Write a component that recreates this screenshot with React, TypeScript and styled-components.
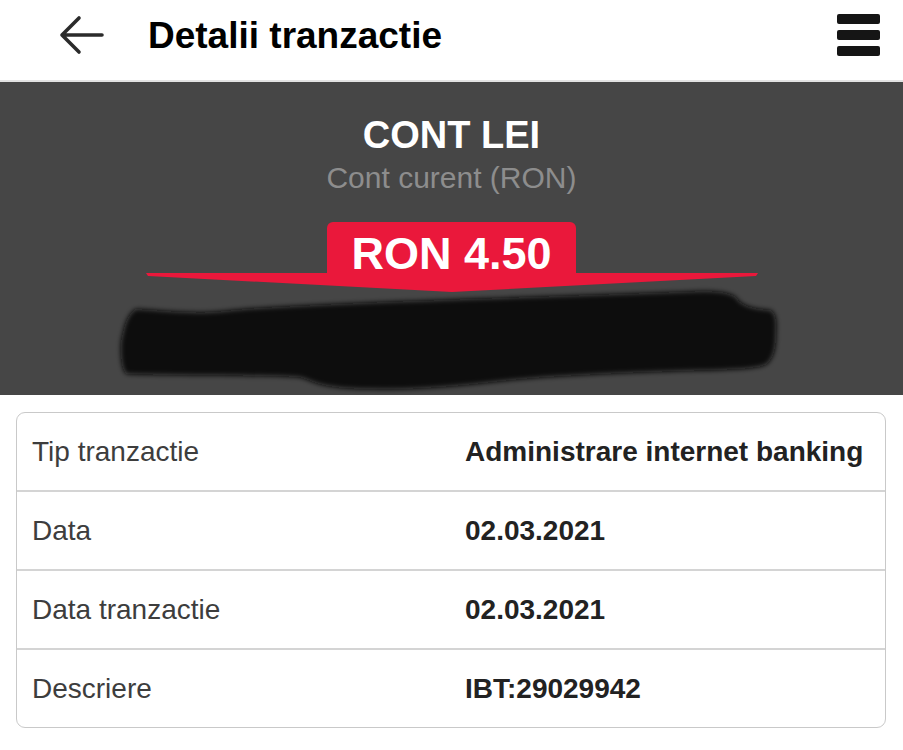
import styled, { createGlobalStyle } from "styled-components";

const GlobalStyle = createGlobalStyle`
  body {
    margin: 0;
    background: #ffffff;
    font-family: "Liberation Sans", Arial, Helvetica, sans-serif;
  }
`;

const Page = styled.div`
  display: flex;
  flex-direction: column;
  width: 903px;
  min-height: 750px;
  background: #ffffff;
`;

const Header = styled.header`
  display: flex;
  align-items: center;
  height: 82px;
  padding: 0 23px 10px 58px;
  box-sizing: border-box;
  border-bottom: 2px solid #e2e2e2;
`;

const BackButton = styled.button`
  all: unset;
  display: flex;
  width: 47px;
  height: 40px;
  cursor: pointer;
`;

const Title = styled.h1`
  flex: 1;
  margin: 2px 0 0 43px;
  color: #000000;
  font-size: 37px;
  font-weight: 700;
  letter-spacing: 0;
`;

const MenuButton = styled.button`
  all: unset;
  display: flex;
  flex-direction: column;
  gap: 6px;
  cursor: pointer;
`;

const MenuBar = styled.span`
  display: block;
  width: 43px;
  height: 10px;
  border-radius: 2px;
  background: #151515;
`;

const AccountPanel = styled.section`
  display: flex;
  flex-direction: column;
  align-items: center;
  height: 313px;
  padding-top: 31px;
  box-sizing: border-box;
  background: #464646;
  overflow: hidden;
`;

const AccountName = styled.div`
  color: #ffffff;
  font-size: 38px;
  font-weight: 700;
  line-height: 44px;
`;

const AccountType = styled.div`
  margin-top: 4px;
  color: #8d8d8d;
  font-size: 30px;
  line-height: 34px;
`;

const AmountBlock = styled.div`
  display: flex;
  flex-direction: column;
  align-items: center;
  margin-top: 27px;
`;

const AmountBadge = styled.div`
  padding: 8px 24px 0;
  height: 52px;
  box-sizing: border-box;
  border-radius: 6px 6px 0 0;
  background: #ea183b;
  color: #ffffff;
  font-size: 45px;
  font-weight: 700;
  line-height: 48px;
`;

const Ribbon = styled.svg`
  display: block;
  width: 612px;
  height: 20px;
  margin-top: -1px;
`;

const Redaction = styled.svg`
  display: block;
  width: 680px;
  height: 112px;
  margin-top: -10px;
`;

const DetailsTable = styled.div`
  margin: 17px 17px 0 16px;
  border: 1px solid #c9c9c9;
  border-radius: 9px;
  overflow: hidden;
`;

const DetailRow = styled.div<{ $first?: boolean }>`
  display: grid;
  grid-template-columns: 433px 1fr;
  align-items: center;
  height: 77px;
  padding: 0 15px;
  border-top: ${(p) => (p.$first ? "none" : "2px solid #d4d4d4")};
`;

const Label = styled.span`
  color: #3d3d3d;
  font-size: 28px;
`;

const Value = styled.span`
  color: #222222;
  font-size: 28px;
  font-weight: 700;
  white-space: nowrap;
`;

const details = [
  ["Tip tranzactie", "Administrare internet banking"],
  ["Data", "02.03.2021"],
  ["Data tranzactie", "02.03.2021"],
  ["Descriere", "IBT:29029942"],
];

export default function App() {
  return (
    <Page>
      <GlobalStyle />
      <Header>
        <BackButton aria-label="Inapoi">
          <svg width="47" height="40" viewBox="0 0 47 40" fill="none">
            <path
              d="M21 3 L4 20 L21 37 M4 20 H44"
              stroke="#2b2b2b"
              strokeWidth="3.6"
              strokeLinecap="round"
              strokeLinejoin="round"
            />
          </svg>
        </BackButton>
        <Title>Detalii tranzactie</Title>
        <MenuButton aria-label="Meniu">
          <MenuBar />
          <MenuBar />
          <MenuBar />
        </MenuButton>
      </Header>

      <AccountPanel>
        <AccountName>CONT LEI</AccountName>
        <AccountType>Cont curent (RON)</AccountType>
        <AmountBlock>
          <AmountBadge>RON 4.50</AmountBadge>
          <Ribbon viewBox="0 0 612 20">
            <path d="M0 0 H612 L610 3 L306 19 L2 3 Z" fill="#ea183b" />
          </Ribbon>
          <Redaction viewBox="0 0 680 112">
            <defs>
              <filter id="soft" x="-5%" y="-20%" width="110%" height="140%">
                <feGaussianBlur stdDeviation="2.4" />
              </filter>
            </defs>
            <path
              filter="url(#soft)"
              fill="#0b0b0b"
              d="M24 26 C60 28 90 32 122 27 C200 20 400 15 568 9 C600 7 622 8 626 17 C630 22 640 26 658 27 C664 30 665 38 664 50 C664 62 663 72 656 80 C650 86 620 87 568 88 C500 90 470 92 434 94 C380 98 320 108 260 106 C200 106 200 95 184 94 C150 92 60 93 15 91 C8 88 8 60 10 54 C12 46 14 32 24 26 Z"
            />
          </Redaction>
        </AmountBlock>
      </AccountPanel>

      <DetailsTable>
        {details.map(([label, value], i) => (
          <DetailRow key={label} $first={i === 0}>
            <Label>{label}</Label>
            <Value>{value}</Value>
          </DetailRow>
        ))}
      </DetailsTable>
    </Page>
  );
}
